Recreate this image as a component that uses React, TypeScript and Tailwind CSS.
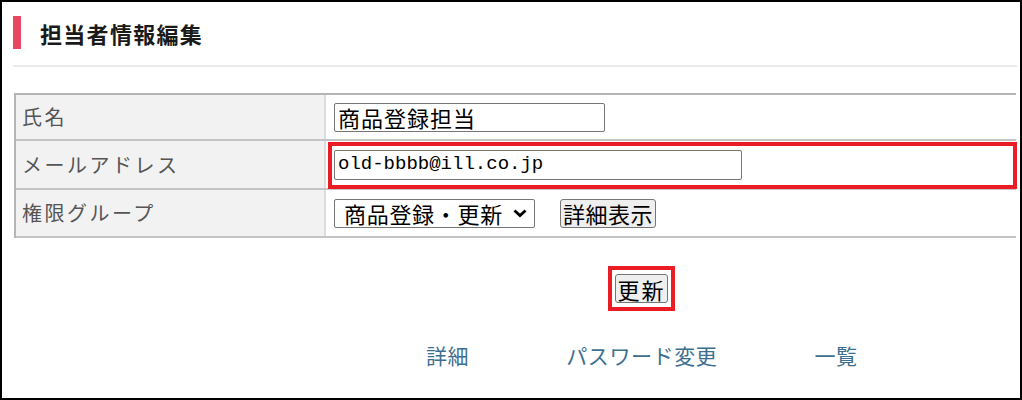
import React from 'react';

const jp = { fontFamily: '"Noto Sans CJK JP", "Noto Sans", sans-serif' };

const Row: React.FC<{ label: string; h: string; children: React.ReactNode; marked?: boolean }> = ({ label, h, children, marked }) => {
  return (
    <div className={`flex border-b-2 border-[#c4c4c4] ${h}`}>
      <div className="w-[310px] flex items-center pl-[6px] bg-[#f2f2f2] border-r-2 border-[#dcdcdc] text-[20px] tracking-[2.5px] text-[#555555]">
        {label}
      </div>
      <div className="relative flex-1 flex items-center pl-[8px] gap-[25px]">
        {marked && <div className="absolute top-[1px] bottom-[-1px] left-[2px] right-[-1px] border-4 border-[#ec1c24]"></div>}
        {children}
      </div>
    </div>
  );
};

const App: React.FC = () => {
  return (
    <div className="w-[1022px] h-[400px] border-2 border-black bg-white overflow-hidden" style={jp}>
      <div className="ml-[11px] w-[1004px]">
        <div className="flex items-center mt-[14px] h-[33px]">
          <div className="w-[8px] h-[33px] bg-[#e8475f]"></div>
          <h1 className="ml-[19px] text-[22px] font-bold tracking-[1.3px] text-[#1a1a1a] leading-none">担当者情報編集</h1>
        </div>
        <div className="mt-[16px] h-[2px] bg-[#ebebeb]"></div>

        <div className="mt-[26px] ml-[1px] w-[1002px] border-t-2 border-l-2 border-[#b5b5b5]">
          <Row label="氏名" h="h-[46px]">
            <div className="w-[271px] h-[29px] border border-[#767676] rounded-[2px] flex items-center px-[3px] text-[22px] tracking-[1px] text-black leading-none">
              商品登録担当
            </div>
          </Row>
          <Row label="メールアドレス" h="h-[49px]" marked>
            <div className="relative w-[408px] h-[30px] border border-[#767676] rounded-[2px] flex items-center px-[3px] text-[19px] text-black leading-none" style={{ fontFamily: '"Liberation Mono", monospace' }}>
              old-bbbb@ill.co.jp
            </div>
          </Row>
          <Row label="権限グループ" h="h-[48px]">
            <div className="w-[201px] h-[29px] border border-[#767676] rounded-[2px] flex items-center pl-[9px] pr-[6px] text-[22px] tracking-[0.7px] text-black leading-none">
              <span>商品登録・更新</span>
              <svg className="ml-auto" width="16" height="10" viewBox="0 0 16 10">
                <path d="M2.5 2.5 L8 7.5 L13.5 2.5" fill="none" stroke="#000" strokeWidth="2.8" />
              </svg>
            </div>
            <button className="w-[96px] h-[29px] border border-[#767676] rounded-[3px] bg-[#efefef] text-[22px] tracking-[0.5px] text-black leading-none">
              詳細表示
            </button>
          </Row>
        </div>

        <div className="mt-[28px] ml-[595px] w-[67px] border-4 border-[#ec1c24] px-[3px] pt-[4px] pb-[3px]">
          <button className="w-[53px] h-[29px] border border-[#767676] rounded-[3px] bg-[#efefef] text-[22px] tracking-[2px] text-black leading-none">
            更新
          </button>
        </div>

        <div className="mt-[32px] ml-[413px] flex gap-[97px] text-[21px] tracking-[0.6px] leading-[24px] text-[#3d6f90]">
          <a href="#">詳細</a>
          <a href="#">パスワード変更</a>
          <a href="#">一覧</a>
        </div>
      </div>
    </div>
  );
};

export default App;
